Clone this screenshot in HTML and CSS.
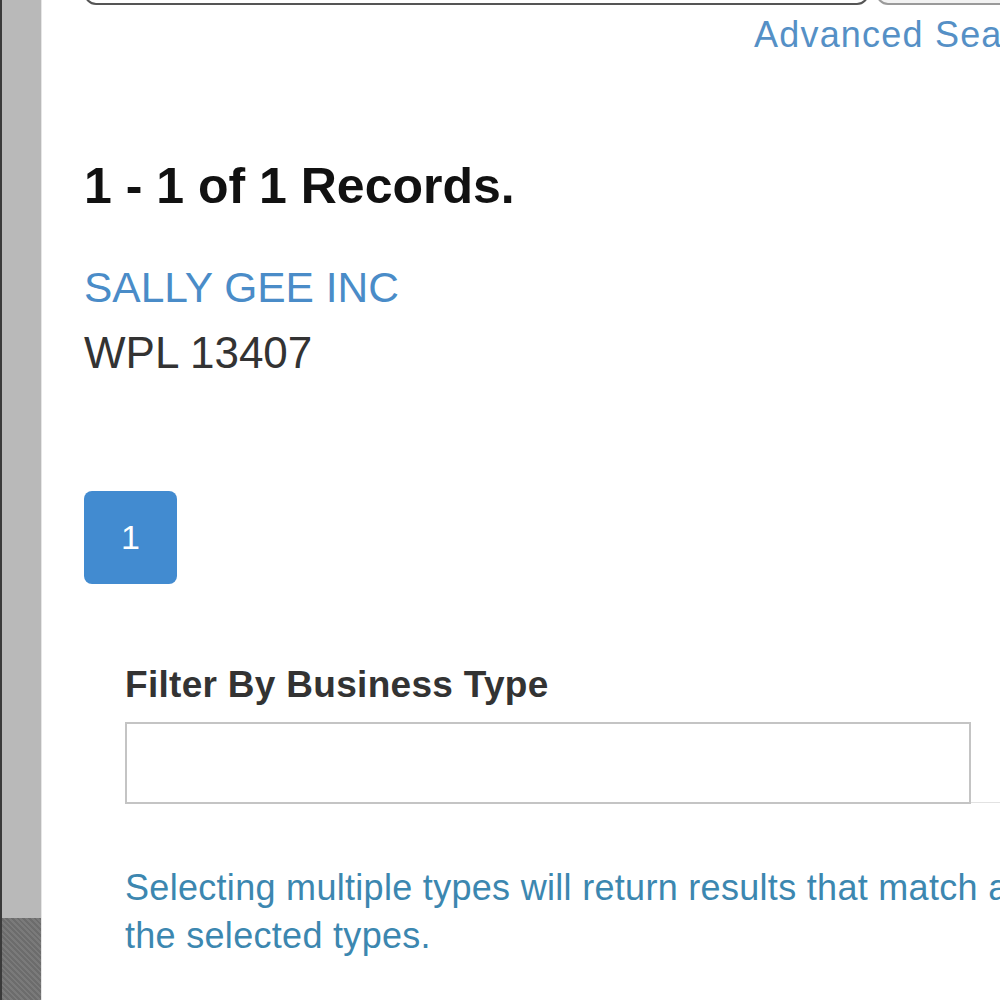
FILE: index.html
```html
<!DOCTYPE html>
<html lang="en">
  <head>
    <meta charset="UTF-8" />
    <meta name="viewport" content="width=device-width, initial-scale=1.0" />
    <title>Business Search Results</title>
    <link rel="stylesheet" href="styles.css">
  </head>
  <body>
    <aside class="side-strip">
      <div class="side-top"></div>
      <div class="side-bottom"></div>
    </aside>

    <main class="content">
      <div class="search-row">
        <input class="search-input" type="text" />
        <button class="search-btn" type="button"></button>
      </div>
      <div class="advanced-row">
        <a class="advanced-link" href="#">Advanced Search</a>
      </div>

      <h1 class="result-count">1 - 1 of 1 Records.</h1>

      <div class="record">
        <a class="record-name" href="#">SALLY GEE INC</a>
        <div class="record-id">WPL 13407</div>
      </div>

      <nav class="pager">
        <a class="page-btn active" href="#">1</a>
      </nav>

      <section class="filter">
        <label class="filter-label" for="bizType">Filter By Business Type</label>
        <div class="filter-field">
          <input class="filter-input" id="bizType" type="text" />
          <span class="filter-rule"></span>
        </div>
        <p class="help-text">Selecting multiple types will return results that match any of the selected types.</p>
      </section>
    </main>
  </body>
</html>
```

FILE: styles.css
```css
/* Page frame */
body {
  margin: 0;
  display: flex;
  min-height: 1000px;
  overflow: hidden;
  background: #fff;
  font-family: "Liberation Sans", Arial, sans-serif;
}

/* --- Left grey strip --- */
.side-strip {
  flex: 0 0 42px;
  display: flex;
  flex-direction: column;
  border-left: 2px solid #3a3a3a;
  box-sizing: border-box;
  border-right: 1px solid #e6e6e6;
}

.side-top {
  height: 918px;
  background: #b9b9b9;
}

.side-bottom {
  flex: 1;
  background: repeating-linear-gradient(
    45deg,
    #6c6c6c 0,
    #6c6c6c 2px,
    #7a7a7a 2px,
    #7a7a7a 4px
  );
}

/* --- Main column --- */
.content {
  flex: 0 0 1100px;
  padding-left: 42px;
}

.search-row {
  display: flex;
  gap: 7px;
  height: 50px;
  margin-top: -45px;
}

.search-input {
  width: 785px;
  box-sizing: border-box;
  border: 2px solid #555;
  border-radius: 0 0 12px 12px;
  background: #fff;
}

.search-btn {
  width: 200px;
  border: 2px solid #9a9a9a;
  border-radius: 0 0 0 12px;
  background: #f2f2f2;
}

.advanced-row {
  margin-top: 10px;
  padding-left: 670px;
  font-size: 36px;
  line-height: 40px;
  white-space: nowrap;
}

.advanced-link {
  letter-spacing: 1.2px;
  color: #5590c6;
  text-decoration: none;
}

.result-count {
  margin: 103px 0 0;
  font-size: 50px;
  line-height: 56px;
  font-weight: 700;
  color: #111;
}

.record {
  margin-top: 49px;
}

.record-name {
  display: block;
  font-size: 42.5px;
  line-height: 50px;
  color: #4a8cc8;
  text-decoration: none;
}

.record-id {
  margin-top: 12px;
  font-size: 44px;
  line-height: 56px;
  color: #333;
}

/* Pagination */
.pager {
  margin-top: 110px;
  display: flex;
}

.page-btn {
  width: 93px;
  height: 93px;
  display: flex;
  align-items: center;
  justify-content: center;
  border-radius: 8px;
  background: #428bd0;
  color: #fff;
  font-size: 34px;
  text-decoration: none;
}

/* Filter block */
.filter {
  margin-top: 79px;
  padding-left: 41px;
}

.filter-label {
  display: block;
  font-size: 37px;
  line-height: 44px;
  letter-spacing: 0.3px;
  font-weight: 700;
  color: #333;
}

.filter-field {
  margin-top: 15px;
  display: flex;
  align-items: flex-end;
}

.filter-input {
  width: 846px;
  height: 82px;
  box-sizing: border-box;
  border: 2px solid #c4c4c4;
  background: #fff;
}

.filter-rule {
  flex: 0 0 60px;
  height: 1px;
  margin-bottom: 1px;
  background: #e2e2e2;
}

.help-text {
  margin: 60px 0 0;
  width: 1000px;
  font-size: 36px;
  line-height: 48px;
  letter-spacing: 0.3px;
  color: #3c87b0;
}
```
